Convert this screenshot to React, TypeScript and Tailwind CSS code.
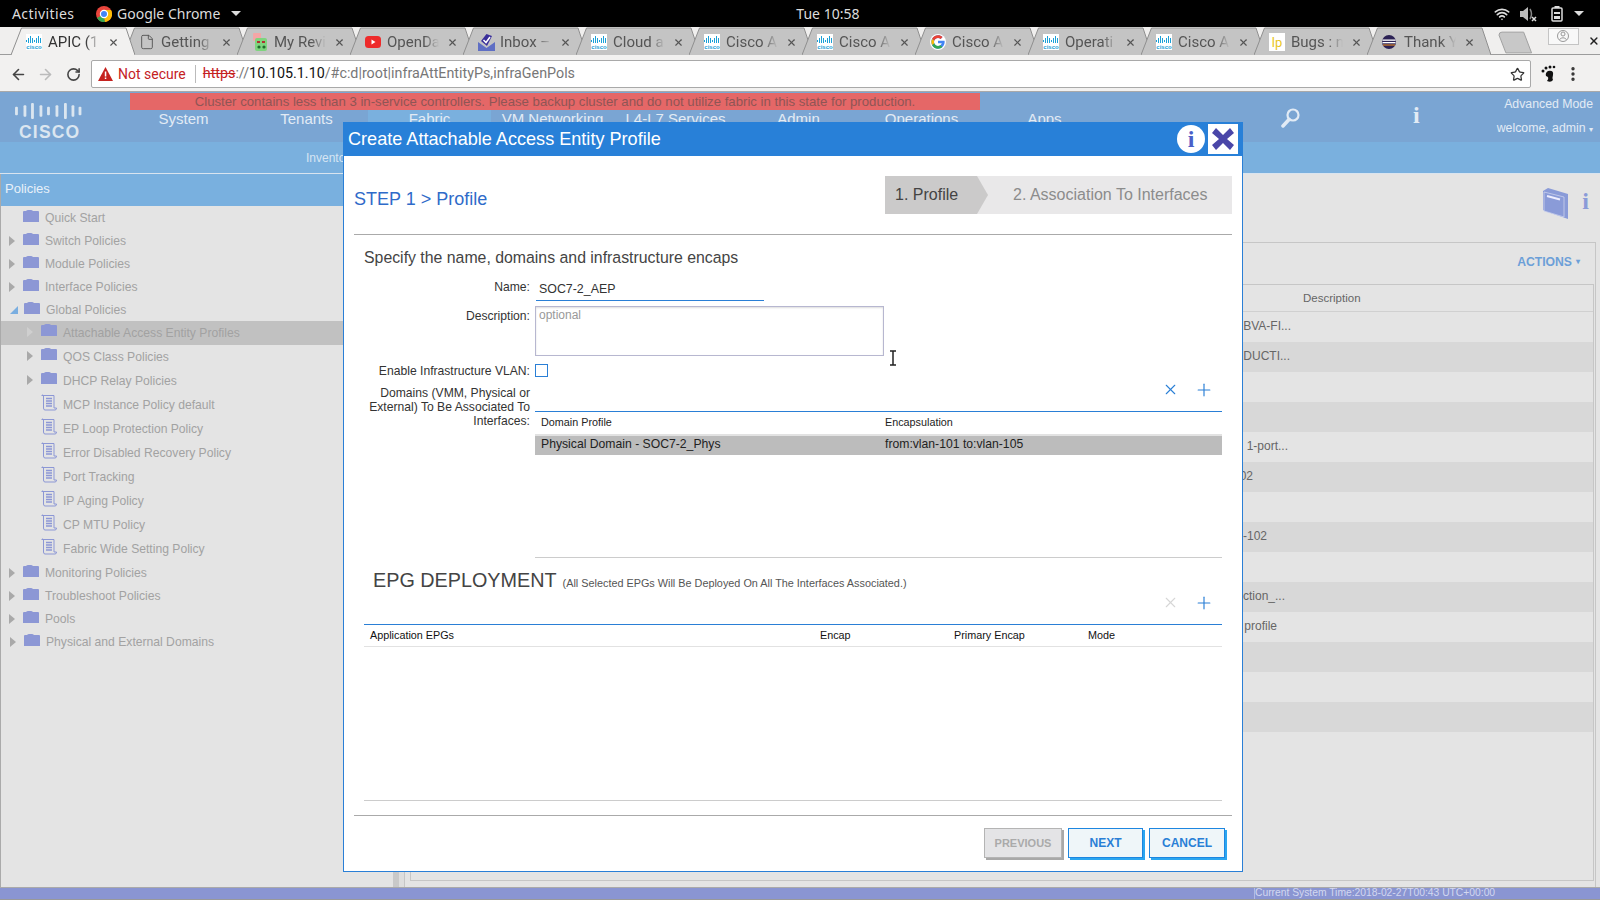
import React from "react";
import { ArrowLeft, ArrowRight, RotateCw, Star, EllipsisVertical, Wifi, File, Plus, X } from "lucide-react";

const CiscoFav = () => (
  <svg width="16" height="16" viewBox="0 0 16 16">
    <rect width="16" height="16" fill="#fff" />
    {[1, 3, 5, 7, 9, 11, 13, 15].map((x, i) => (
      <line key={x} x1={x - 0.5} x2={x - 0.5} y1={[6, 4, 2, 4, 6, 4, 2, 4][i]} y2={[8, 9, 9, 9, 8, 9, 9, 9][i]} stroke="#1ba0d7" strokeWidth="1" />
    ))}
    <text x="8" y="15" fontSize="6" fontWeight="700" fontFamily="Liberation Sans, sans-serif" textAnchor="middle" fill="#1ba0d7">cisco</text>
  </svg>
);

const favs: Record<string, React.ReactNode> = {
  cisco: <CiscoFav />,
  doc: <File size={16} strokeWidth={1.4} color="#555" />,
  rev: (
    <svg width="16" height="18" viewBox="0 0 16 18">
      <rect x="1" y="0" width="8" height="8" rx="1" fill="#f4a6a6" />
      <rect x="3" y="5" width="12" height="13" rx="2" fill="#7ed47e" />
      <rect x="5" y="8" width="3" height="2" fill="#b23030" />
      <rect x="10" y="8" width="3" height="2" fill="#b23030" />
      <circle cx="7" cy="14" r="1.6" fill="#1f6b2c" />
      <circle cx="12" cy="14" r="1.6" fill="#1f6b2c" />
    </svg>
  ),
  yt: (
    <svg width="16" height="16" viewBox="0 0 16 16">
      <rect y="2" width="16" height="12" rx="3.5" fill="#ee2b2b" />
      <path d="M6.5 5.5 L10.5 8 L6.5 10.5Z" fill="#fff" />
    </svg>
  ),
  inbox: (
    <svg width="17" height="18" viewBox="0 0 17 18">
      <path d="M0 9 L8.5 15 L17 9 V18 H0Z" fill="#5f6fc4" />
      <path d="M3 8 L8.5 1 L14 3 L9 13Z" fill="#3a2f9a" />
      <path d="M5.5 7 L8 9.5 L12 4" stroke="#fff" strokeWidth="1.5" fill="none" />
    </svg>
  ),
  g: (
    <svg width="16" height="16" viewBox="0 0 48 48">
      <circle cx="24" cy="24" r="24" fill="#fff" />
      <path d="M43.6 20.5H24v7.5h11.3C33.7 33 29.3 36 24 36c-6.6 0-12-5.4-12-12s5.4-12 12-12c3 0 5.8 1.1 7.9 3l5.7-5.7C34 6 29.3 4 24 4 13 4 4 13 4 24s9 20 20 20 20-9 20-20c0-1.2-.1-2.4-.4-3.5z" fill="#4285f4" />
      <path d="M6.3 14.7l6.6 4.8C14.7 15.1 19 12 24 12c3 0 5.8 1.1 7.9 3l5.7-5.7C34 6 29.3 4 24 4 16.3 4 9.7 8.3 6.3 14.7z" fill="#ea4335" />
      <path d="M24 44c5.2 0 9.9-2 13.4-5.2l-6.2-5.2C29.2 35.100 26.700 36 24 36c-5.200 0-9.600-3.300-11.300-8l-6.500 5C9.500 39.600 16.200 44 24 44z" fill="#34a853" />
      <path d="M12.700 28c-.5-1.200-.7-2.600-.7-4s.2-2.800.7-4l-6.400-5.300C4.800 17.500 4 20.600 4 24s.8 6.500 2.200 9.300z" fill="#fbbc05" />
    </svg>
  ),
  lp: (
    <div className="flex h-[18px] w-[16px] items-center justify-center bg-white text-[13px] leading-none text-[#e8c51c]">lp</div>
  ),
  ecl: (
    <svg width="14" height="14" viewBox="0 0 14 14">
      <circle cx="7" cy="7" r="7" fill="#2c2255" />
      <rect x="0.500" y="4.500" width="13" height="1.300" fill="#fff" />
      <rect x="0.500" y="7" width="13" height="1.300" fill="#fff" />
      <rect x="1" y="9.500" width="12" height="1" fill="#f7941e" />
    </svg>
  ),
};

const tabs = [
  ["APIC (1", "cisco"], ["Getting S", "doc"], ["My Revi", "rev"], ["OpenDa", "yt"], ["Inbox –", "inbox"], ["Cloud a", "cisco"], ["Cisco AI", "cisco"],
  ["Cisco AI", "cisco"], ["Cisco AI", "g"], ["Operati", "cisco"], ["Cisco AI", "cisco"], ["Bugs : n", "lp"], ["Thank Y", "ecl"],
];

const Tab = ({ label, fav, active }: { label: string; fav: string; active?: boolean }) => (
  <div className={`relative -mr-[11px] h-[28px] w-[124px] shrink-0 ${active ? "z-10" : ""}`}>
    <svg className="absolute inset-0" width="124" height="28" viewBox="0 0 124 28">
      <path d="M0 28 L10.500 1 H115 L124 28Z" fill={active ? "#f2f1f0" : "#c4c4c4"} />
      <path d="M0 28 L10.500 1 H115 L124 28" fill="none" stroke="#8f8f8f" strokeWidth="1" />
    </svg>
    <div className="relative flex h-full items-center pl-[15px] pt-[3px]">
      <div className="flex w-[22px] shrink-0 items-center">{favs[fav]}</div>
      <div className={`w-[52px] overflow-hidden whitespace-nowrap text-[15px] [mask-image:linear-gradient(to_right,black_72%,transparent)] ${active ? "text-[#333]" : "text-[#555]"}`}>{label}</div>
      <X size={11} strokeWidth={2.500} className="ml-[8px] text-[#555]" />
    </div>
  </div>
);

type Row = { label: string; level: 0 | 1; icon: "folder" | "doc"; arrow?: "right" | "down"; tall?: boolean; sel?: boolean; nudge?: boolean };
const tree: Row[] = [
  { label: "Quick Start", level: 0, icon: "folder" },
  { label: "Switch Policies", level: 0, icon: "folder", arrow: "right" },
  { label: "Module Policies", level: 0, icon: "folder", arrow: "right" },
  { label: "Interface Policies", level: 0, icon: "folder", arrow: "right" },
  { label: "Global Policies", level: 0, icon: "folder", arrow: "down", nudge: true },
  { label: "Attachable Access Entity Profiles", level: 1, icon: "folder", arrow: "right", tall: true, sel: true },
  { label: "QOS Class Policies", level: 1, icon: "folder", arrow: "right", tall: true },
  { label: "DHCP Relay Policies", level: 1, icon: "folder", arrow: "right", tall: true },
  { label: "MCP Instance Policy default", level: 1, icon: "doc", tall: true },
  { label: "EP Loop Protection Policy", level: 1, icon: "doc", tall: true },
  { label: "Error Disabled Recovery Policy", level: 1, icon: "doc", tall: true },
  { label: "Port Tracking", level: 1, icon: "doc", tall: true },
  { label: "IP Aging Policy", level: 1, icon: "doc", tall: true },
  { label: "CP MTU Policy", level: 1, icon: "doc", tall: true },
  { label: "Fabric Wide Setting Policy", level: 1, icon: "doc", tall: true },
  { label: "Monitoring Policies", level: 0, icon: "folder", arrow: "right" },
  { label: "Troubleshoot Policies", level: 0, icon: "folder", arrow: "right" },
  { label: "Pools", level: 0, icon: "folder", arrow: "right" },
  { label: "Physical and External Domains", level: 0, icon: "folder", arrow: "right", nudge: true },
];

const Folder = () => (
  <svg width="16" height="13" viewBox="0 0 16 13" className="-mt-[5px]">
    <path d="M0 2 Q0 1 1 1 H3 Q4 0 5 0 H8 Q9 0 10 1 H15 Q16 1 16 2 V12 H0Z" fill="#8c97d5" />
  </svg>
);
const Scroll = () => (
  <svg width="16" height="17" viewBox="0 0 16 17" className="-mt-[5px]" fill="none" stroke="#8c97d5" strokeWidth="1">
    <path d="M0.500 1.500 H13 V14 H15.500 Q15.500 16 14 16 H4 Q2.500 16 2.500 14 V2 Q2.500 0.800 1 1" />
    <path d="M5 4.500 H11 M5 7 H11 M5 9.500 H11 M5 12 H11" strokeWidth="1.300" />
  </svg>
);

const TreeRow = ({ r }: { r: Row }) => (
  <div className={`flex w-full items-center whitespace-nowrap text-[12.150px] text-[#a2a2a2] ${r.tall ? "h-[24px]" : "h-[23px] pt-[2px]"} ${r.sel ? "bg-[#c1c1c1]" : ""} ${r.level === 1 ? "pl-[26px]" : r.nudge ? "pl-[9px]" : "pl-[8px]"}`}>
    <div className="flex w-[14px] shrink-0 items-center -mt-[2px]">
      {r.arrow === "right" && <div className={`h-0 w-0 border-y-[5px] border-l-[6px] border-y-transparent ${r.sel ? "border-l-[#cfcfcf]" : "border-l-[#a9a9a9]"}`} />}
      {r.arrow === "down" && <div className="h-0 w-0 border-b-[8px] border-l-[8px] border-b-[#7aaee0] border-l-transparent" />}
    </div>
    <div className="flex w-[22px] shrink-0 items-center">{r.icon === "folder" ? <Folder /> : <Scroll />}</div>
    <span>{r.label}</span>
  </div>
);

const descs: [string, string][] = [
  ["BVA-FI...", "w-[880px]"], ["DUCTI...", "w-[879px]"], ["", "w-[10px]"], ["", "w-[10px]"], ["1-port...", "w-[877px]"], ["02", "w-[842px]"],
  ["", "w-[10px]"], ["-102", "w-[856px]"], ["", "w-[10px]"], ["ction_...", "w-[874px]"], ["profile", "w-[866px]"], ["", "w-[10px]"], ["", "w-[10px]"], ["", "w-[10px]"],
];

const navItems = ["System", "Tenants", "Fabric", "VM Networking", "L4-L7 Services", "Admin", "Operations", "Apps"];

const Button = ({ children, cls }: { children: React.ReactNode; cls: string }) => (
  <div className={`flex h-[30px] items-center justify-center border font-bold ${cls}`}>{children}</div>
);

export default function App() {
  return (
    <div className="relative flex h-[900px] w-[1600px] flex-col overflow-hidden bg-[#e4e4e4] font-['Liberation_Sans',Arial,sans-serif]">
      {/* GNOME top bar */}
      <div className="flex h-[27px] shrink-0 items-center bg-black font-['Noto_Sans',sans-serif] text-[14px] text-[#dcdcdc]">
        <span className="ml-[12px] w-[84px] tracking-[0.4px]">Activities</span>
        <svg width="16" height="16" viewBox="0 0 16 16">
          <circle cx="8" cy="8" r="8" fill="#e8453c" />
          <path d="M8 8 L1 12 A8 8 0 0 0 9 16Z" fill="#34a853" />
          <path d="M8 8 L9 16 A8 8 0 0 0 15 4 H8Z" fill="#fbbc05" />
          <circle cx="8" cy="8" r="3.600" fill="#4285f4" stroke="#fff" strokeWidth="1.200" />
        </svg>
        <span className="ml-[5px]">Google Chrome</span>
        <div className="ml-[11px] h-0 w-0 border-x-[5px] border-t-[5px] border-x-transparent border-t-[#dcdcdc]" />
        <span className="ml-[555px] w-[66px] whitespace-nowrap">Tue 10:58</span>
        <Wifi size={16} strokeWidth={2.500} className="ml-[632px]" />
        <svg width="18" height="16" viewBox="0 0 18 16" className="ml-[10px]" fill="#bbb">
          <path d="M0 5 H3 L8 1 V15 L3 11 H0Z" />
          <path d="M10 3 Q13 8 10 13" fill="none" stroke="#888" strokeWidth="1.500" />
          <path d="M12 11 L16 15 M16 11 L12 15" stroke="#ddd" strokeWidth="1.500" />
        </svg>
        <svg width="12" height="16" viewBox="0 0 12 16" className="ml-[13px]" fill="none" stroke="#ddd" strokeWidth="1.500">
          <rect x="1" y="2" width="10" height="13" rx="1" />
          <rect x="3.500" y="0" width="5" height="2" fill="#ddd" stroke="none" />
          <rect x="3" y="6" width="6" height="2" fill="#ddd" stroke="none" />
          <rect x="3" y="10" width="6" height="3" fill="#ddd" stroke="none" />
        </svg>
        <div className="ml-[11px] h-0 w-0 border-x-[5px] border-t-[5px] border-x-transparent border-t-[#dcdcdc]" />
      </div>

      {/* Tabs */}
      <div className="flex h-[28px] shrink-0 items-center border-b border-[#9c9c9c] bg-[#f0efee] pl-[11px] font-['Roboto',sans-serif]">
        {tabs.map(([l, f], i) => (
          <Tab key={i} label={l} fav={f} active={i === 0} />
        ))}
        <svg width="36" height="24" viewBox="0 0 36 24" className="ml-[18px] mt-[4px]">
          <path d="M1 4 Q1 1 4 1 H26 L34 22 H8Z" fill="#c8c8c8" stroke="#a0a0a0" />
        </svg>
        <div className="ml-[14px] mb-[9px] flex h-[17px] w-[32px] items-center justify-center border border-[#c4c4c4] bg-[#f8f8f8]">
          <svg width="12" height="14" viewBox="0 0 12 14" fill="none" stroke="#999">
            <circle cx="6" cy="7" r="5.500" />
            <circle cx="6" cy="5" r="2" />
            <path d="M2.500 10.500 Q6 7 9.500 10.500" />
          </svg>
        </div>
        <X size={12} strokeWidth={3} className="ml-[9px] text-[#222]" />
      </div>

      {/* Address bar */}
      <div className="flex h-[37px] shrink-0 items-center border-b border-[#a9a9a9] bg-[#f2f1f0] pt-[2px]">
        <ArrowLeft size={17} strokeWidth={2.300} className="ml-[10px] text-[#444]" />
        <ArrowRight size={17} strokeWidth={2.300} className="ml-[10px] text-[#bbb]" />
        <RotateCw size={15} strokeWidth={2.500} className="ml-[12px] text-[#444]" />
        <div className="ml-[10px] flex h-[28px] w-[1440px] items-center rounded-[2px] border border-[#a9a9a9] bg-white pl-[6px] font-['Roboto',sans-serif] text-[14.300px] text-[#777]">
          <svg width="15" height="14" viewBox="0 0 15 14"><path d="M7.500 0 L15 14 H0Z" fill="#c5221f" /><rect x="6.800" y="4.500" width="1.500" height="5" fill="#fff" /><rect x="6.800" y="10.500" width="1.500" height="1.500" fill="#fff" /></svg>
          <span className="ml-[5px] whitespace-nowrap text-[14px] text-[#c5221f]">Not secure</span>
          <div className="ml-[9px] h-[18px] w-px bg-[#bbb]" />
          <span className="ml-[7px] text-[#c5221f] line-through">https</span>
          <span>://</span>
          <span className="text-[#111]">10.105.1.10</span>
          <span className="whitespace-nowrap">/#c:d|root|infraAttEntityPs,infraGenPols</span>
          <Star size={15} strokeWidth={2} className="ml-auto mr-[5px] text-[#333]" />
        </div>
        <svg width="16" height="18" viewBox="0 0 16 18" className="ml-[10px]" fill="#111">
          <path d="M7 6 Q13 5 12 10 Q11 13 12 15 Q10 18 6 16 Q9 12 5 11 Q4 8 7 6Z" />
          <circle cx="2" cy="6" r="1.500" /><circle cx="5" cy="3" r="1.500" /><circle cx="9" cy="2" r="1.500" /><circle cx="13" cy="2" r="1.300" />
        </svg>
        <EllipsisVertical size={18} strokeWidth={2.500} className="ml-[7px] text-[#333]" />
      </div>

      {/* App header */}
      <div className="relative flex h-[50px] shrink-0 bg-[#7aa5d3] text-[#e2ebf5]">
        <div className="flex w-[122px] shrink-0 flex-col items-start pl-[13px] pt-[11px]">
          <svg width="70" height="17" viewBox="0 0 70 17" fill="#dbe6f0">
            {[[0, 9], [9, 12], [17, 17], [26, 12], [34, 9], [43, 12], [52, 17], [60, 12], [67.500, 9]].map(([x, h]) => (
              <rect key={x} x={x} y={(17 - h) / 2} width="3" height={h} rx="1" />
            ))}
          </svg>
          <div className="ml-[6px] mt-[3px] text-[17.500px] font-bold leading-[20px] tracking-[1.200px] text-[#dbe6f0]">CISCO</div>
        </div>
        {navItems.map((n) => (
          <div key={n} className={`mt-[18px] flex h-[32px] w-[123px] shrink-0 justify-center whitespace-nowrap text-[15px] leading-[18px] ${n === "Fabric" ? "bg-[#7ab0de]" : ""}`}>
            {n}
          </div>
        ))}
        <svg width="19" height="20" viewBox="0 0 19 20" className="ml-[175px] mt-[16px]" fill="none" stroke="#e2ebf5">
          <circle cx="12" cy="7" r="5.500" strokeWidth="2.200" />
          <path d="M8 11.500 L2 18" strokeWidth="3.500" strokeLinecap="round" />
        </svg>
        <span className="ml-[113px] mt-[10px] font-['Liberation_Serif',serif] text-[24px] font-bold leading-[27px]">i</span>
        <div className="ml-auto mr-[7px] flex flex-col items-end whitespace-nowrap pt-[3px] text-[12.300px] leading-[18px]">
          <span>Advanced Mode</span>
          <span className="mt-[6px]">welcome, admin <span className="text-[8px]">▾</span></span>
        </div>
        <div className="absolute left-[130px] top-[1px] flex h-[17px] w-[850px] items-center justify-center whitespace-nowrap bg-[#e56767] text-[13.200px] text-[#8f5555]">
          Cluster contains less than 3 in-service controllers. Please backup cluster and do not utilize fabric in this state for production.
        </div>
      </div>

      {/* Sub nav */}
      <div className="flex h-[32px] shrink-0 items-center border-b border-[#d9e4ef] bg-[#7ab0de] pl-[306px] text-[12px] text-[#d6e5f3]">Inventory</div>

      {/* Main */}
      <div className="flex min-h-0 flex-1">
        <div className="w-[393px] shrink-0 border-l border-[#aaa]">
          <div className="flex h-[32px] items-center bg-[#79b0df] pb-[2px] pl-[4px] text-[13px] text-[#e8f0f9]">Policies</div>
          <div className="w-full">
            {tree.map((r) => (
              <TreeRow key={r.label} r={r} />
            ))}
          </div>
        </div>
        <div className="flex w-[11px] shrink-0"><div className="w-[6px] bg-[#c9c9c9]" /><div className="w-[5px] bg-[#dedede]" /></div>
        <div className="flex min-w-0 flex-1 flex-col pr-[4px]">
          <div className="flex h-[68px] shrink-0 items-start justify-end pr-[7px] pt-[14px]">
            <svg width="27" height="31" viewBox="0 0 27 31" className="mr-[13px]">
              <path d="M1 3 L6 0 L26 6 V31 L6 24 L1 22Z" fill="#8a9bd8" />
              <path d="M2 4 L22 9 V29 L2 23Z" fill="#8a9bd8" stroke="#cbd2ee" strokeWidth="0.800" />
              <path d="M5 8 L18 11.500" stroke="#eef" strokeWidth="2" />
            </svg>
            <span className="font-['Liberation_Serif',serif] text-[24px] font-bold leading-[27px] text-[#8a9bd8]">i</span>
          </div>
          <div className="flex min-h-0 w-full flex-1 flex-col border-x border-t border-[#c6c6c6] pb-[6px] pl-[5px] pr-px">
            <div className="flex h-[41px] shrink-0 items-center justify-end pb-[3px] pr-[14px] text-[12.200px] font-bold text-[#6c9fd8]">
              ACTIONS <span className="ml-[4px] text-[8px]">▾</span>
            </div>
            <div className="flex min-h-0 flex-1 flex-col border border-[#c6c6c6]">
              <div className="flex h-[27px] shrink-0 items-center border-b border-[#d0d0d0] pl-[892px] pt-[2px] text-[11.500px] text-[#666]">Description</div>
              {descs.map(([t, w], i) => (
                <div key={i} className={`flex h-[30px] shrink-0 items-center text-[12px] text-[#666] ${i % 2 === 1 ? "bg-[#d8d8d8]" : ""}`}>
                  <div className={`${w} pb-[2px] text-right whitespace-nowrap`}>{t}</div>
                </div>
              ))}
            </div>
          </div>
        </div>
      </div>

      {/* Status */}
      <div className="flex h-[13px] shrink-0 items-center border-y border-t-[#aaa] border-b-[#999] bg-[#8a95d2] pl-[1254px] text-[10.300px] leading-none text-[#d3d8f0]">
        <span className="whitespace-nowrap border-l border-[#b4bbe2]">Current System Time:2018-02-27T00:43 UTC+00:00</span>
      </div>

      {/* Modal */}
      <div className="absolute left-[343px] top-[122px] flex h-[750px] w-[900px] flex-col border-x border-b border-[#2a7fd6] bg-white text-[12.150px] text-[#333]">
        <div className="relative -mx-px flex h-[34px] shrink-0 items-center bg-[#2880d8] pl-[5px] text-[18.100px] text-white">
          <span className="mt-[2px]">Create Attachable Access Entity Profile</span>
          <div className="ml-auto mr-[5px] flex items-center gap-[3px]">
            <div className="flex h-[28px] w-[28px] items-center justify-center rounded-full bg-white font-['Liberation_Serif',serif] text-[24px] font-bold leading-none text-[#4a60c8]">i</div>
            <div className="flex h-[30px] w-[30px] items-center justify-center bg-white">
              <svg width="22" height="22" viewBox="0 0 22 22"><path d="M4 0 L11 7 L18 0 L22 5 L15 11 L22 17 L18 22 L11 15 L4 22 L0 17 L7 11 L0 5Z" fill="#4a46a8" /></svg>
            </div>
          </div>
        </div>

        <div className="mx-[10px] flex h-[79px] shrink-0 items-start justify-between border-b border-[#aaa]">
          <span className="mt-[32px] text-[18px] leading-[22px] text-[#2f6bc9]">STEP 1 &gt; Profile</span>
          <div className="mt-[20px] flex h-[38px] w-[347px] items-center bg-[#e9e8e9] text-[16px] text-[#8c8c8c]">
            <div className="flex h-full w-[103px] items-center bg-[#cbcaca] pl-[10px] text-[#444] [clip-path:polygon(0_0,92px_0,103px_50%,92px_100%,0_100%)]">1. Profile</div>
            <span className="ml-[25px] whitespace-nowrap">2. Association To Interfaces</span>
          </div>
        </div>

        <div className="mt-[13px] h-[20px] shrink-0 pl-[20px] text-[15.850px] leading-[20px] text-[#444]">Specify the name, domains and infrastructure encaps</div>

        <div className="mt-[11px] flex h-[22px] shrink-0">
          <div className="w-[186px] pt-[1px] text-right leading-[14px]">Name:</div>
          <input readOnly value="SOC7-2_AEP" className="ml-[6px] h-[22px] w-[228px] border-b border-[#2a7fd6] pb-[2px] pl-[3px] text-[12.400px] text-[#333] outline-none" />
        </div>

        <div className="mt-[5px] flex h-[50px] shrink-0">
          <div className="w-[186px] pt-[3px] text-right leading-[14px]">Description:</div>
          <textarea readOnly placeholder="optional" className="ml-[5px] h-[50px] w-[349px] resize-none border border-[#b7b7d0] px-[3px] py-[1px] text-[12px] leading-[14px] outline-none shadow-[inset_0_1px_2px_#ddd] placeholder:text-[#999]" />
        </div>

        <div className="mt-[8px] flex h-[13px] shrink-0 items-center">
          <div className="w-[186px] whitespace-nowrap text-right leading-[14px]">Enable Infrastructure VLAN:</div>
          <div className="ml-[5px] h-[13px] w-[13px] border border-[#2a7fd6]" />
        </div>

        <div className="mt-[8px] flex h-[173px] shrink-0">
          <div className="w-[186px] shrink-0 pt-[1px] text-right leading-[14px] whitespace-nowrap">
            Domains (VMM, Physical or<br />External) To Be Associated To<br />Interfaces:
          </div>
          <div className="ml-[5px] flex w-[687px] flex-col border-b border-[#ccc]">
            <div className="flex h-[27px] shrink-0 items-start justify-end border-b border-[#2a7fd6] pr-[8px]">
              <X size={17} strokeWidth={1.500} className="-mt-[4px] text-[#2a7fd6]" />
              <Plus size={20} strokeWidth={1.400} className="-mt-[5px] ml-[15px] text-[#2a7fd6]" />
            </div>
            <div className="flex h-[24px] shrink-0 items-center border-b-2 border-[#e2e2e2] pb-[1px] pl-[6px] text-[10.800px] text-[#222]">
              <span className="w-[344px]">Domain Profile</span>
              <span>Encapsulation</span>
            </div>
            <div className="flex h-[19px] shrink-0 items-center bg-[#bcbcbc] pb-[3px] pl-[6px] text-[12.200px] text-[#222]">
              <span className="w-[344px]">Physical Domain - SOC7-2_Phys</span>
              <span>from:vlan-101 to:vlan-105</span>
            </div>
          </div>
        </div>

        <div className="mx-[20px] flex h-[66px] shrink-0 flex-col">
          <div className="mt-[10px] flex items-baseline whitespace-nowrap pl-[9px]">
            <span className="text-[19.800px] leading-[24px] text-[#444]">EPG DEPLOYMENT</span>
            <span className="ml-[6px] text-[10.850px] text-[#555]">(All Selected EPGs Will Be Deployed On All The Interfaces Associated.)</span>
          </div>
          <div className="flex justify-end pr-[8px]">
            <X size={17} strokeWidth={1.500} className="mt-[2px] text-[#d6d6d6]" />
            <Plus size={20} strokeWidth={1.400} className="mt-px ml-[15px] text-[#2a7fd6]" />
          </div>
        </div>
        <div className="mx-[20px] flex h-[176px] shrink-0 flex-col">
          <div className="flex h-[23px] shrink-0 items-center border-y border-y-[#e2e2e2] border-t-[#2a7fd6] pl-[6px] text-[10.800px] text-[#111]">
            <span className="w-[450px]">Application EPGs</span>
            <span className="w-[134px]">Encap</span>
            <span className="w-[134px]">Primary Encap</span>
            <span>Mode</span>
          </div>
        </div>
        <div className="mx-[20px] h-px shrink-0 bg-[#ccc]" />
        <div className="mx-[10px] mt-[14px] h-px shrink-0 bg-[#aaa]" />
        <div className="mt-[12px] flex justify-end gap-[6px] pr-[17px]">
          <Button cls="w-[78px] border-[#b4b4b4] bg-[#e4e4e6] text-[11px] text-[#aaa] shadow-[2px_2px_0_#a8a8a8]">PREVIOUS</Button>
          <Button cls="w-[75px] border-[#1d86e0] bg-[#eff6f9] text-[12px] text-[#2a7fd6] shadow-[2px_2px_0_#2ba6f0]">NEXT</Button>
          <Button cls="w-[76px] border-[#1d86e0] bg-[#eff6f9] text-[12px] text-[#2a7fd6] shadow-[2px_2px_0_#2ba6f0]">CANCEL</Button>
        </div>
      </div>

      {/* I-beam cursor */}
      <svg width="8" height="16" viewBox="0 0 8 16" className="absolute left-[889px] top-[350px]" fill="none" stroke="#222" strokeWidth="1.500">
        <path d="M1 1 H7 M4 1 V15 M1 15 H7" />
      </svg>
    </div>
  );
}
